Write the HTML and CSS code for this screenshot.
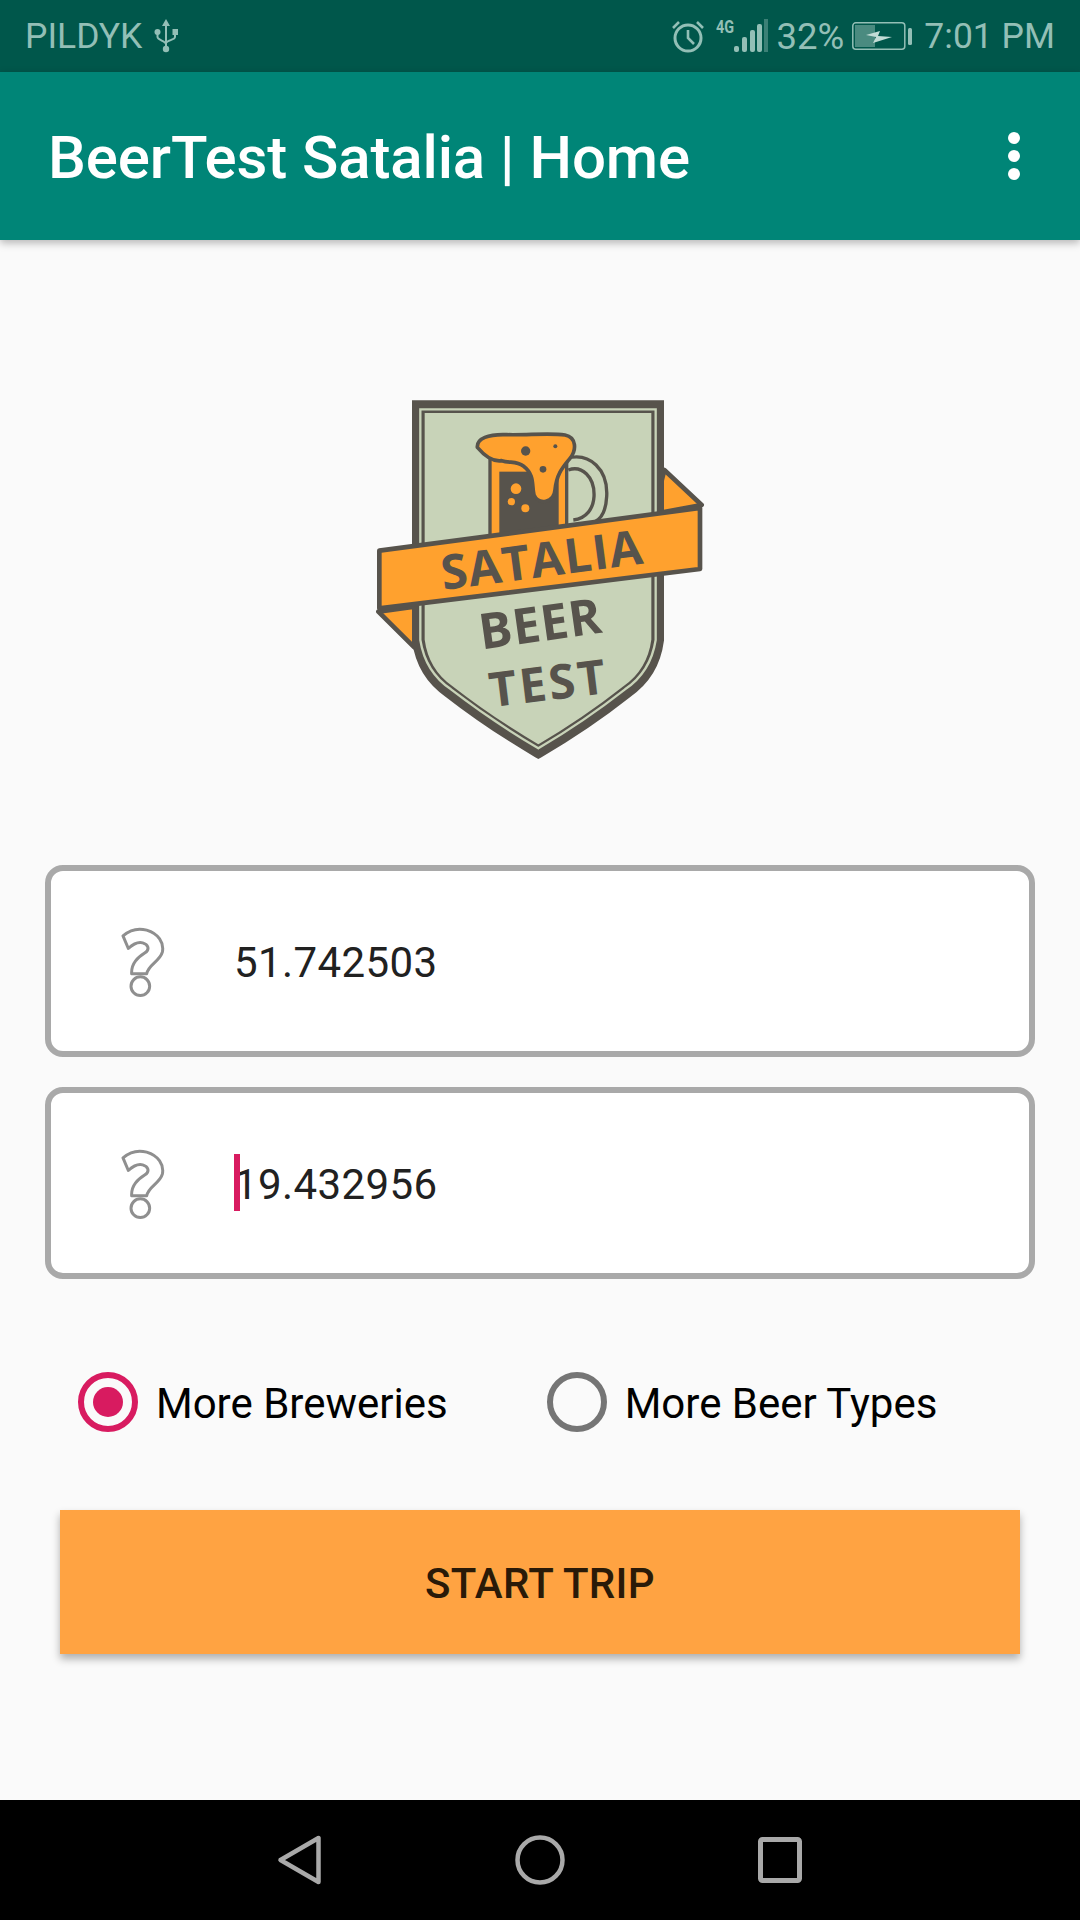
FILE: index.html
```html
<!DOCTYPE html>
<html lang="en">
<head>
    <meta charset="UTF-8">
    <meta name="viewport" content="width=device-width, initial-scale=1.0">
    <title>BeerTest Satalia | Home</title>
    <link rel="stylesheet" href="styles.css">
</head>
<body>
    <div class="screen">
        <!-- Status bar -->
        <div class="status-bar">
            <div class="status-left">
                <span>PILDYK</span>
                <svg class="usb-icon" viewBox="0 0 26 36" width="26" height="36">
                    <path d="M13 1l4 7h-3v24h-2V8H9z" fill="#93bfb6"/>
                    <circle cx="13" cy="31" r="3.2" fill="#93bfb6"/>
                    <circle cx="4.5" cy="14" r="3" fill="#93bfb6"/>
                    <rect x="19.5" y="11" width="5.5" height="6" fill="#93bfb6"/>
                    <path d="M4.5 15v4c0 3 8 4 8.5 7M22 16v3c0 3-8 3-9 6" fill="none" stroke="#93bfb6" stroke-width="2"/>
                </svg>
            </div>
            <div class="status-right">
                <svg class="alarm-icon" viewBox="0 0 34 34" width="34" height="34">
                    <circle cx="17" cy="19" r="13" fill="none" stroke="#93bfb6" stroke-width="3"/>
                    <path d="M17 11v8l6 6" fill="none" stroke="#93bfb6" stroke-width="2.6"/>
                    <path d="M2 9l6-6M32 9l-6-6" fill="none" stroke="#93bfb6" stroke-width="2.6"/>
                </svg>
                <span class="net-type">4G</span>
                <svg class="signal-icon" viewBox="0 0 35 34" width="35" height="34">
                    <rect x="0" y="27" width="5" height="6" rx="2" fill="#93bfb6"/>
                    <rect x="8" y="18" width="5" height="15" rx="2" fill="#93bfb6"/>
                    <rect x="16" y="11" width="5" height="22" rx="2" fill="#93bfb6"/>
                    <rect x="23" y="5" width="5" height="28" rx="2" fill="#93bfb6"/>
                    <rect x="30" y="0" width="4" height="33" fill="#93bfb6" opacity="0.4"/>
                </svg>
                <span class="battery-text">32%</span>
                <svg class="battery-icon" viewBox="0 0 60 30" width="60" height="30">
                    <rect x="0.8" y="1.8" width="52" height="26.5" rx="3" fill="none" stroke="#93bfb6" stroke-width="1.5"/>
                    <rect x="3" y="4" width="20" height="22" fill="#93bfb6" opacity="0.5"/>
                    <path d="M14 14l14-4-2 5 14 1-19 6 3-6z" fill="#c2dcd6"/>
                    <rect x="56" y="7" width="4" height="17" rx="1.5" fill="#93bfb6"/>
                </svg>
                <span class="clock">7:01 PM</span>
            </div>
        </div>

        <!-- App bar -->
        <div class="app-bar">
            <h1>BeerTest Satalia | Home</h1>
            <div class="menu-dots"><i></i><i></i><i></i></div>
        </div>

        <div class="content">
            <!-- Logo -->
            <svg class="logo" viewBox="0 0 1080 1140" width="360" height="380">
                <path d="M913 240L1025 345 880 372zM55 665L163 772V650z" fill="#ffa12e" stroke="#57534c" stroke-width="14" stroke-linejoin="round"/>
                <path class="shield" d="M175 50H893V750Q880 850 800 905Q680 1000 535 1085 390 1000 268 905 188 850 175 750Z" fill="#c8d3b8" stroke="#57534c" stroke-width="38"/>
                <path d="M181 58H887V750Q872 846 795 898Q675 992 535 1075 395 992 273 898 196 846 181 750Z" fill="none" stroke="#c8d3b8" stroke-width="7"/>
                <!-- handle -->
                <path d="M620 205C690 185 745 240 740 320 738 360 725 385 705 395M625 240C665 225 705 260 702 320 700 355 680 385 640 390" fill="none" stroke="#57534c" stroke-width="10"/>
                <!-- glass -->
                <rect x="390" y="205" width="230" height="235" fill="#ffa12e" stroke="#57534c" stroke-width="10"/>
                <rect x="418" y="245" width="178" height="195" fill="#57534c"/>
                <!-- foam -->
                <path d="M352 172C350 145 385 132 440 134 500 136 570 128 615 135 650 142 650 180 630 205 610 230 590 250 585 300 582 340 535 345 522 315 515 285 525 255 490 228 470 212 450 220 425 212 405 215 380 205 352 172Z" fill="#ffa12e" stroke="#57534c" stroke-width="11" stroke-linejoin="round"/>
                <circle cx="497" cy="183" r="14" fill="#57534c"/>
                <circle cx="586" cy="169" r="6" fill="#57534c"/>
                <circle cx="549" cy="238" r="10" fill="#57534c"/>
                <circle cx="468" cy="296" r="16" fill="#ffa12e"/>
                <circle cx="454" cy="335" r="11" fill="#ffa12e"/>
                <circle cx="496" cy="355" r="12" fill="#ffa12e"/>
                <!-- ribbon -->
                <path d="M58 482L1020 354V537L58 655Z" fill="#ffa12e" stroke="#57534c" stroke-width="14" stroke-linejoin="round"/>
                <text class="logo-text" transform="translate(545 505) rotate(-7.5)" font-size="144" letter-spacing="3">SATALIA</text>
                <text class="logo-text" transform="translate(540 695) rotate(-8)" font-size="148" letter-spacing="2">BEER</text>
                <text class="logo-text" transform="translate(565 875) rotate(-7)" font-size="144" letter-spacing="8">TEST</text>
            </svg>

            <!-- Fields -->
            <div class="field">
                <svg class="hint-icon" viewBox="265 225 135 212" width="45" height="71">
                    <path d="M274 254C295 236 320 230 345 237 380 247 398 275 392 303 385 330 350 340 345 368H300C298 335 320 318 340 305 355 295 350 280 333 275 318 271 305 278 290 292Z" fill="none" stroke="#8f8f8f" stroke-width="9" stroke-linejoin="round"/>
                    <circle cx="326" cy="405" r="28" fill="none" stroke="#8f8f8f" stroke-width="9"/>
                </svg>
                <span class="field-value">51.742503</span>
            </div>
            <div class="field field-focused">
                <svg class="hint-icon" viewBox="265 225 135 212" width="45" height="71">
                    <path d="M274 254C295 236 320 230 345 237 380 247 398 275 392 303 385 330 350 340 345 368H300C298 335 320 318 340 305 355 295 350 280 333 275 318 271 305 278 290 292Z" fill="none" stroke="#8f8f8f" stroke-width="9" stroke-linejoin="round"/>
                    <circle cx="326" cy="405" r="28" fill="none" stroke="#8f8f8f" stroke-width="9"/>
                </svg>
                <span class="field-value"><i class="caret"></i>19.432956</span>
            </div>

            <!-- Options -->
            <div class="options">
                <div class="option">
                    <span class="radio radio-checked"></span>
                    <span class="option-label">More Breweries</span>
                </div>
                <div class="option">
                    <span class="radio"></span>
                    <span class="option-label">More Beer Types</span>
                </div>
            </div>

            <button class="start-btn" type="button">START TRIP</button>
        </div>

        <!-- Navigation bar -->
        <div class="nav-bar">
            <svg viewBox="0 0 60 60" width="60" height="60">
                <path d="M48.5 8V52L10.5 30Z" fill="none" stroke="#a9a9a9" stroke-width="4.5" stroke-linejoin="round"/>
            </svg>
            <svg viewBox="0 0 60 60" width="60" height="60">
                <circle cx="30" cy="30" r="22.5" fill="none" stroke="#a9a9a9" stroke-width="4.5"/>
            </svg>
            <svg viewBox="0 0 60 60" width="60" height="60">
                <rect x="10.5" y="9.5" width="39" height="41" rx="2" fill="none" stroke="#a9a9a9" stroke-width="5"/>
            </svg>
        </div>
    </div>
</body>
</html>
```

FILE: styles.css
```css
body {
    margin: 0;
    font-family: 'Roboto', sans-serif;
    background-color: #fafafa;
}
.screen {
    width: 1080px;
    height: 1920px;
    display: flex;
    flex-direction: column;
    overflow: hidden;
}
.status-bar {
    height: 72px;
    flex-shrink: 0;
    padding: 0 25px 0 25px;
    box-sizing: border-box;
    display: flex;
    justify-content: space-between;
    align-items: center;
    background-color: #00574b;
    color: #93bfb6;
    font-size: 35.5px;
}
.status-left,
.status-right {
    display: flex;
    align-items: center;
}
.usb-icon {
    margin-left: 11px;
}
.net-type {
    font-size: 18px;
    font-weight: 700;
    width: 18px;
    margin: 0 0 20px 11px;
    transform: scaleX(0.8);
    transform-origin: left center;
}
.battery-text {
    margin-left: 8px;
    font-size: 36.5px;
}
.battery-icon {
    margin-left: 8px;
}
.clock {
    margin-left: 12px;
}
.app-bar {
    height: 168px;
    flex-shrink: 0;
    padding: 0 60px 0 48px;
    box-sizing: border-box;
    display: flex;
    justify-content: space-between;
    align-items: center;
    background-color: #008577;
    color: #fff;
    box-shadow: 0 3px 8px rgba(0, 0, 0, 0.28);
    position: relative;
}
.app-bar h1 {
    margin: 3px 0 0;
    font-size: 60px;
    font-weight: 500;
    letter-spacing: -0.12px;
}
.menu-dots {
    display: flex;
    flex-direction: column;
    gap: 6px;
}
.menu-dots i {
    width: 12px;
    height: 12px;
    border-radius: 50%;
    background-color: #fff;
}
.content {
    flex: 1;
    padding: 150px 45px 0;
    display: flex;
    flex-direction: column;
}
.logo {
    align-self: flex-start;
    margin: 0 0 95px 315px;
}
.logo-text {
    font-family: 'Open Sans', sans-serif;
    font-weight: 700;
    fill: #57534c;
    text-anchor: middle;
    dominant-baseline: central;
}
.field {
    height: 192px;
    box-sizing: border-box;
    border: 6px solid #a9a9a9;
    border-radius: 18px;
    background-color: #fff;
    display: flex;
    align-items: center;
    padding-left: 69px;
}
.field + .field {
    margin-top: 30px;
}
.hint-icon {
    flex-shrink: 0;
}
.field-value {
    margin: 2px 0 0 69px;
    font-size: 42px;
    letter-spacing: 0.4px;
    color: #212121;
    position: relative;
}
.caret {
    position: absolute;
    left: 0;
    top: -6px;
    width: 6px;
    height: 57px;
    background-color: #d81b60;
}
.options {
    margin-top: 93px;
    padding-left: 33px;
    display: flex;
    font-size: 42px;
    color: #000;
}
.option {
    display: flex;
    align-items: center;
    gap: 18px;
}
.option + .option {
    margin-left: 99px;
}
.option-label {
    padding-top: 2px;
}
.radio {
    width: 60px;
    height: 60px;
    box-sizing: border-box;
    border: 6px solid #757575;
    border-radius: 50%;
    display: flex;
    align-items: center;
    justify-content: center;
}
.radio-checked {
    border-color: #d81b60;
}
.radio-checked::after {
    content: '';
    width: 30px;
    height: 30px;
    border-radius: 50%;
    background-color: #d81b60;
}
.start-btn {
    margin: 78px 15px 0;
    height: 144px;
    padding: 2px 0 0;
    border: none;
    background-color: #ffa342;
    color: #2a1a08;
    font-family: 'Roboto', sans-serif;
    font-size: 42px;
    font-weight: 500;
    letter-spacing: 0.3px;
    box-shadow: 0 5px 8px rgba(0, 0, 0, 0.3);
}
.nav-bar {
    height: 120px;
    flex-shrink: 0;
    display: flex;
    justify-content: center;
    align-items: center;
    gap: 180px;
    background-color: #000;
}
```
